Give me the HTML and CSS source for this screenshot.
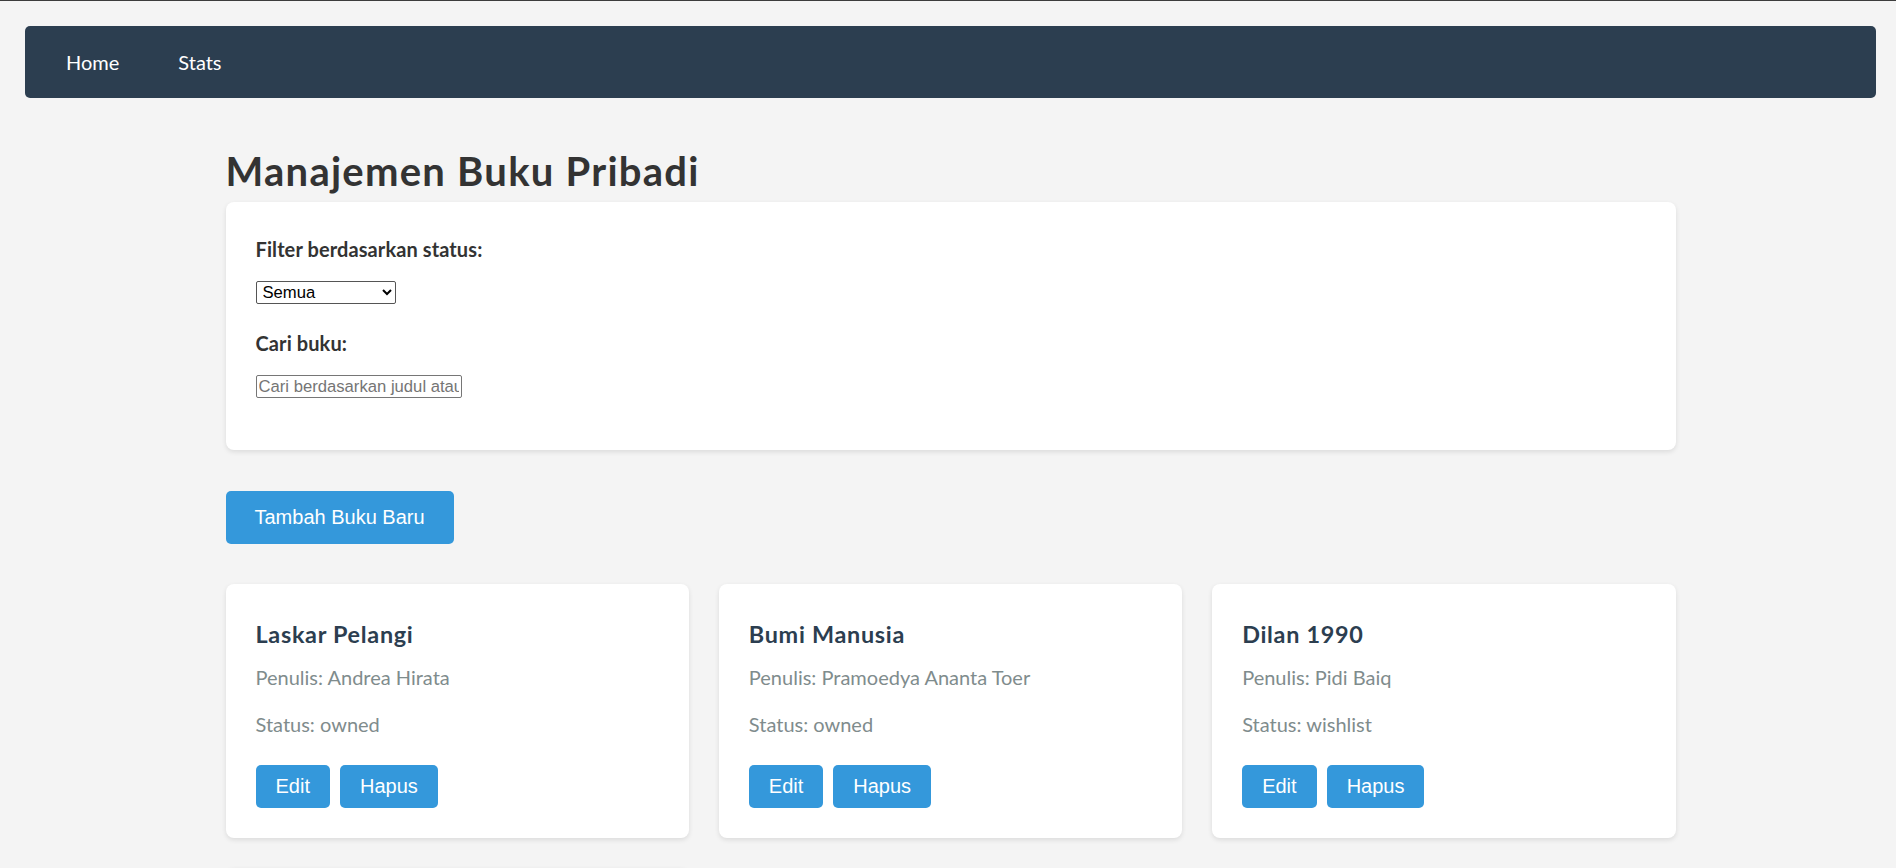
FILE: index.html
```html
<!DOCTYPE html>
<html lang="id">
<head>
<meta charset="utf-8">
<title>Manajemen Buku Pribadi</title>
<link rel="stylesheet" href="styles.css">
</head>
<body>
<nav class="navbar">
  <a class="nav-link" href="#">Home</a>
  <a class="nav-link" href="#">Stats</a>
</nav>
<main class="page">
  <div class="container">
    <h1 class="page-title">Manajemen Buku Pribadi</h1>
    <section class="filter-card">
      <div class="form-group">
        <label class="form-label" for="status">Filter berdasarkan status:</label>
        <select class="status-select" id="status">
          <option>Semua</option>
          <option>Dimiliki</option>
          <option>Sedang Dibaca</option>
          <option>Wishlist</option>
        </select>
      </div>
      <div class="form-group last">
        <label class="form-label" for="search">Cari buku:</label>
        <input class="search-input" id="search" type="text" placeholder="Cari berdasarkan judul atau penulis">
      </div>
    </section>
    <button class="btn-primary">Tambah Buku Baru</button>
    <div class="book-grid">
      <article class="book-card">
        <h3 class="book-title">Laskar Pelangi</h3>
        <p class="book-meta">Penulis: Andrea Hirata</p>
        <p class="book-meta">Status: owned</p>
        <div class="book-actions">
          <button class="btn-small">Edit</button>
          <button class="btn-small">Hapus</button>
        </div>
      </article>
      <article class="book-card">
        <h3 class="book-title">Bumi Manusia</h3>
        <p class="book-meta">Penulis: Pramoedya Ananta Toer</p>
        <p class="book-meta">Status: owned</p>
        <div class="book-actions">
          <button class="btn-small">Edit</button>
          <button class="btn-small">Hapus</button>
        </div>
      </article>
      <article class="book-card">
        <h3 class="book-title">Dilan 1990</h3>
        <p class="book-meta">Penulis: Pidi Baiq</p>
        <p class="book-meta">Status: wishlist</p>
        <div class="book-actions">
          <button class="btn-small">Edit</button>
          <button class="btn-small">Hapus</button>
        </div>
      </article>
      <article class="book-card">
        <h3 class="book-title">Negeri 5 Menara</h3>
        <p class="book-meta">Penulis: Ahmad Fuadi</p>
        <p class="book-meta">Status: reading</p>
        <div class="book-actions">
          <button class="btn-small">Edit</button>
          <button class="btn-small">Hapus</button>
        </div>
      </article>
    </div>
  </div>
</main>
</body>
</html>
```
FILE: styles.css
```css
html, body {
  margin: 0;
  padding: 0;
}
body {
  background: #f4f4f4;
  border-top: 1px solid #3c3c3c;
  font-family: "Lato", "Open Sans", sans-serif;
  color: #333;
}
.navbar {
  margin: 25px 20px 0 25px;
  height: 72px;
  background: #2c3e50;
  border-radius: 5px;
  display: flex;
  align-items: center;
  padding-left: 41px;
  gap: 59px;
}
.nav-link {
  color: #fff;
  text-decoration: none;
  font-size: 20px;
  line-height: 24px;
}
.page {
  padding: 0 20px 40px 25px;
}
.container {
  max-width: 1450px;
  margin: 0 auto;
}
.page-title {
  margin: 49px 0 7px;
  font-size: 40px;
  line-height: 48px;
  font-weight: 700;
  letter-spacing: 1.25px;
  color: #333;
}
.filter-card {
  background: #fff;
  border-radius: 8px;
  box-shadow: 0 2px 5px rgba(0, 0, 0, 0.1);
  padding: 35px 30px 30px;
}
.form-group {
  display: flex;
  flex-direction: column;
  align-items: flex-start;
  margin-bottom: 27px;
}
.form-group.last {
  margin-bottom: 22px;
}
.form-label {
  font-size: 20px;
  line-height: 24px;
  font-weight: 700;
  letter-spacing: 0.1px;
  color: #333;
  margin-bottom: 20px;
}
.status-select {
  width: 140px;
  height: 23px;
  font-family: "Liberation Sans", Arial, sans-serif;
  font-size: 16.67px;
  color: #000;
  background: #fff;
  border: 1px solid #555;
  border-radius: 2px;
  padding: 0 0 0 2px;
}
.search-input {
  width: 206px;
  height: 23px;
  box-sizing: border-box;
  font-family: "Liberation Sans", Arial, sans-serif;
  font-size: 16.67px;
  border: 1px solid #767676;
  border-radius: 2px;
  padding: 1px 2px;
}
.search-input::placeholder {
  color: #757575;
}
.btn-primary {
  margin-top: 41px;
  display: block;
  background: #3498db;
  color: #fff;
  border: none;
  border-radius: 5px;
  font-family: "Liberation Sans", Arial, sans-serif;
  font-size: 20px;
  line-height: 23px;
  padding: 15px 29px;
}
.book-grid {
  margin-top: 40px;
  display: grid;
  grid-template-columns: repeat(3, 1fr);
  gap: 30px;
}
.book-card {
  background: #fff;
  border-radius: 8px;
  box-shadow: 0 2px 5px rgba(0, 0, 0, 0.1);
  padding: 30px;
}
.book-title {
  margin: 5px 0 14px;
  font-size: 23.4px;
  line-height: 31px;
  font-weight: 700;
  letter-spacing: 0.7px;
  color: #2c3e50;
}
.book-meta {
  margin: 0 0 20px;
  font-size: 20px;
  line-height: 27px;
  color: #7f8c8d;
}
.book-meta + .book-meta {
  margin-bottom: 27px;
}
.book-actions {
  display: flex;
  gap: 10px;
}
.btn-small {
  background: #3498db;
  color: #fff;
  border: none;
  border-radius: 5px;
  font-family: "Liberation Sans", Arial, sans-serif;
  font-size: 20px;
  line-height: 23px;
  padding: 10px 20px;
}
```
